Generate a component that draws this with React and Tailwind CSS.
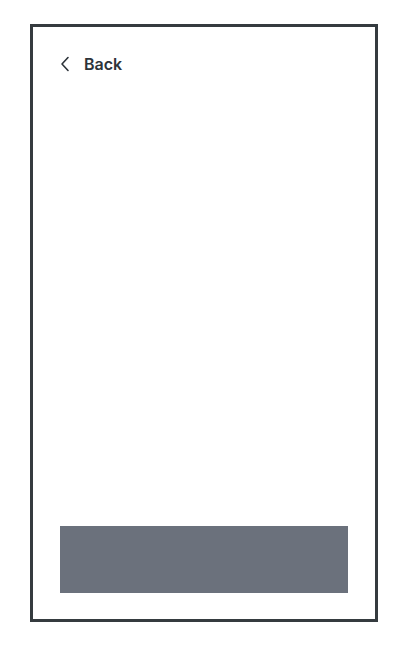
import React from "react";

const App = () => {
  return (
    <div className="w-full h-[650px] bg-white pt-[24px] pl-[30px]">
      <div className="w-[348px] h-[598px] border-[3px] border-[#353b3f] flex flex-col justify-between px-[27px] pb-[26px] pt-[29px]">
        {/* Back link */}
        <div className="flex items-center gap-[14px] text-[#2d3339]" style={{ fontFamily: "Inter, 'Liberation Sans', sans-serif" }}>
          <svg width="10" height="16" viewBox="0 0 10 16" fill="none">
            <path d="M8 1.5 L2 8 L8 14.5" stroke="#2d3339" strokeWidth="1.6" strokeLinecap="round" strokeLinejoin="round" />
          </svg>
          <span className="text-[16px] font-semibold leading-none">Back</span>
        </div>

        {/* Bottom button */}
        <div className="w-full h-[67px] bg-[#6b717c]"></div>
      </div>
    </div>
  );
};

export default App;
